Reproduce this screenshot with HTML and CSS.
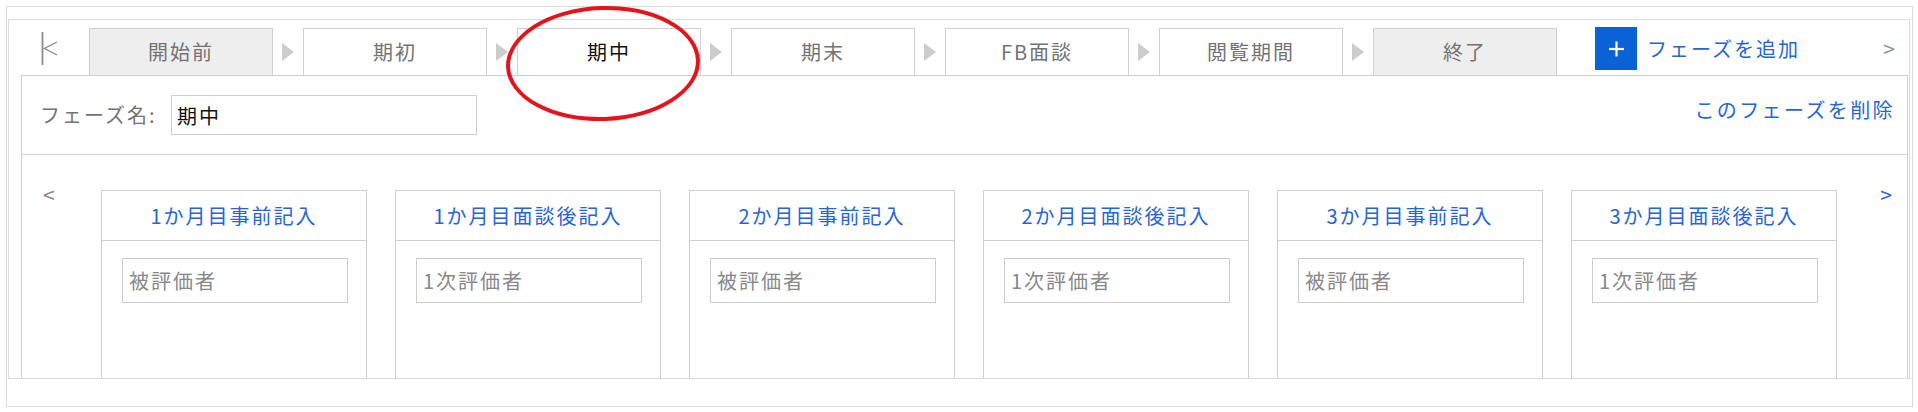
FILE: index.html
```html
<!DOCTYPE html>
<html lang="ja">
<head>
    <meta charset="UTF-8">
    <title>フェーズ設定</title>
    <link rel="stylesheet" href="styles.css">
</head>
<body>
    <div class="frame">
        <div class="phase-box">
            <div class="phase-tabs">
                <span class="nav-first">
                    <svg width="18" height="33" viewBox="0 0 18 33">
                        <line x1="1.5" y1="0" x2="1.5" y2="33" stroke="#8c8c8c" stroke-width="1.8"/>
                        <polyline points="16,10 3.5,16.5 16,23" fill="none" stroke="#8c8c8c" stroke-width="1.4"/>
                    </svg>
                </span>
                <div class="tab done">開始前</div>
                <span class="step-arrow"></span>
                <div class="tab">期初</div>
                <span class="step-arrow"></span>
                <div class="tab active">期中</div>
                <span class="step-arrow"></span>
                <div class="tab">期末</div>
                <span class="step-arrow"></span>
                <div class="tab">FB面談</div>
                <span class="step-arrow"></span>
                <div class="tab">閲覧期間</div>
                <span class="step-arrow"></span>
                <div class="tab done">終了</div>
                <a class="add-phase" href="#">
                    <svg width="42" height="43" viewBox="0 0 42 43">
                        <rect width="42" height="43" fill="#0a63d6"/>
                        <line x1="14" y1="22" x2="29" y2="22" stroke="#fff" stroke-width="2.2"/>
                        <line x1="21.5" y1="14.5" x2="21.5" y2="29.5" stroke="#fff" stroke-width="2.2"/>
                    </svg>
                    フェーズを追加
                </a>
                <span class="nav-next">&gt;</span>
            </div>

            <div class="phase-panel">
                <div class="name-row">
                    <label class="name-label" for="phaseName">フェーズ名:</label>
                    <input class="name-input" id="phaseName" type="text" value="期中">
                    <a class="delete-phase" href="#">このフェーズを削除</a>
                </div>
                <div class="step-area">
                    <span class="scroll-prev">&lt;</span>
                    <div class="cards">
                        <div class="card">
                            <div class="card-title">1か月目事前記入</div>
                            <div class="card-body"><input type="text" placeholder="被評価者"></div>
                        </div>
                        <div class="card">
                            <div class="card-title">1か月目面談後記入</div>
                            <div class="card-body"><input type="text" placeholder="1次評価者"></div>
                        </div>
                        <div class="card">
                            <div class="card-title">2か月目事前記入</div>
                            <div class="card-body"><input type="text" placeholder="被評価者"></div>
                        </div>
                        <div class="card">
                            <div class="card-title">2か月目面談後記入</div>
                            <div class="card-body"><input type="text" placeholder="1次評価者"></div>
                        </div>
                        <div class="card">
                            <div class="card-title">3か月目事前記入</div>
                            <div class="card-body"><input type="text" placeholder="被評価者"></div>
                        </div>
                        <div class="card">
                            <div class="card-title">3か月目面談後記入</div>
                            <div class="card-body"><input type="text" placeholder="1次評価者"></div>
                        </div>
                    </div>
                    <span class="scroll-next">&gt;</span>
                </div>
            </div>
        </div>
    </div>
</body>
</html>
```

FILE: styles.css
```css
body { margin: 0; background: #fff; color: #737373; font-family: "Noto Sans CJK JP", "Noto Sans", sans-serif; font-size: 20px; letter-spacing: 2px; line-height: 1.2; }
a { text-decoration: none; color: #2565d8; }

.frame { margin: 6px 0 0 6px; width: 1907px; height: 401px; box-sizing: border-box; border: 1px solid #dcdcdc; padding: 12px 2px 27px 1px; }
.phase-box { height: 100%; box-sizing: border-box; border: 1px solid #dcdcdc; display: flex; flex-direction: column; }

/* phase tabs */
.phase-tabs { height: 55px; flex-shrink: 0; display: flex; align-items: flex-end; padding-left: 32px; }
.nav-first { width: 48px; align-self: flex-start; margin-top: 12px; }
.nav-first svg { display: block; }
.tab { width: 184px; height: 47px; flex-shrink: 0; box-sizing: border-box; border: 1px solid #d0d0d0; border-bottom: none; background: #fff; display: flex; align-items: center; justify-content: center; }
.tab.done { background: #eeeeee; }
.tab.active { color: #111; position: relative; }
.tab.active::after { content: ""; position: absolute; left: -12px; top: -23px; width: 194px; height: 115px; box-sizing: border-box; border: 4px solid #e5131b; border-radius: 50%; transform: rotate(-2deg); }
.step-arrow { width: 30px; height: 47px; flex-shrink: 0; display: flex; align-items: center; justify-content: center; }
.step-arrow::before { content: ""; border-left: 12px solid #cccccc; border-top: 9px solid transparent; border-bottom: 9px solid transparent; }
.add-phase { display: flex; align-items: center; gap: 10px; margin-left: 38px; align-self: center; margin-top: 2px; white-space: nowrap; }
.add-phase svg { display: block; }
.nav-next { margin-left: auto; margin-right: 12px; align-self: center; margin-top: 2px; font-size: 21px; color: #8896a6; }

/* phase panel */
.phase-panel { flex: 1; margin: 0 1px 0 12px; border: 1px solid #d0d0d0; border-bottom: none; overflow: hidden; }
.name-row { height: 79px; box-sizing: border-box; border-bottom: 1px solid #d0d0d0; display: flex; align-items: center; padding: 0 12px 0 18px; }
.name-label { width: 131px; flex-shrink: 0; }
.name-input { width: 306px; height: 40px; box-sizing: border-box; border: 1px solid #cccccc; padding: 0 5px; font: inherit; letter-spacing: inherit; color: #111; outline: none; }
.delete-phase { margin-left: auto; margin-bottom: 10px; letter-spacing: 2.4px; }

.step-area { display: flex; align-items: flex-start; padding: 35px 13px 0 21px; }
.scroll-prev { width: 58px; flex-shrink: 0; font-size: 21px; line-height: 20px; margin-top: -6px; color: #888; }
.scroll-next { margin-left: auto; font-size: 21px; line-height: 20px; margin-top: -6px; color: #2565d8; }
.cards { display: flex; gap: 28px; }
.card { width: 266px; height: 230px; flex-shrink: 0; box-sizing: border-box; border: 1px solid #d0d0d0; }
.card-title { height: 50px; box-sizing: border-box; border-bottom: 1px solid #d0d0d0; display: flex; align-items: center; justify-content: center; color: #2565d8; }
.card-body { padding: 17px 18px 0 20px; }
.card-body input { display: block; width: 226px; height: 45px; box-sizing: border-box; border: 1px solid #cccccc; padding: 0 6px; font: inherit; letter-spacing: inherit; outline: none; }
.card-body input::placeholder { color: #888; opacity: 1; }
```
